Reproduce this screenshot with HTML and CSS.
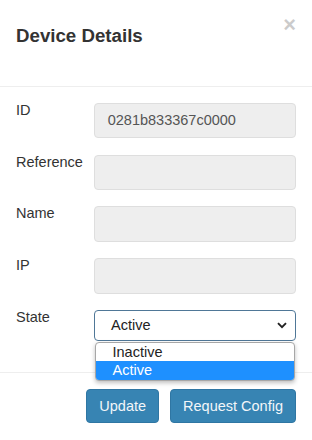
FILE: index.html
```html
<!DOCTYPE html>
<html lang="en">
<head>
    <meta charset="UTF-8">
    <meta name="viewport" content="width=device-width, initial-scale=1">
    <title>Device Details</title>
    <link rel="stylesheet" href="styles.css">
</head>
<body>
    <div class="modal">
        <div class="modal-header">
            <h4 class="modal-title">Device Details</h4>
            <span class="close">&times;</span>
        </div>
        <div class="modal-body">
            <div class="form-row">
                <label>ID</label>
                <div class="field">0281b833367c0000</div>
            </div>
            <div class="form-row">
                <label>Reference</label>
                <div class="field"></div>
            </div>
            <div class="form-row">
                <label>Name</label>
                <div class="field"></div>
            </div>
            <div class="form-row">
                <label>IP</label>
                <div class="field"></div>
            </div>
            <div class="form-row last">
                <label>State</label>
                <div class="select-wrap">
                    <div class="select-box">
                        <span>Active</span>
                        <svg class="chevron" width="10" height="7" viewBox="0 0 10 7">
                            <polyline points="1,1.2 5,5.2 9,1.2" fill="none" stroke="#222" stroke-width="1.9"/>
                        </svg>
                    </div>
                    <ul class="options">
                        <li>Inactive</li>
                        <li class="selected">Active</li>
                    </ul>
                </div>
            </div>
        </div>
        <div class="modal-footer">
            <button class="btn">Update</button>
            <button class="btn">Request Config</button>
        </div>
    </div>
</body>
</html>
```

FILE: styles.css
```css
*{
    margin:0;
    padding:0;
    box-sizing:border-box;
}
ul li{
    list-style-type:none;
}
body{
    font-family:"Liberation Sans",Arial,sans-serif;
    font-size:14.5px;
    color:#333;
    background:#fff;
}
.modal{
    width:312px;
    height:440px;
    background:#fff;
}
.modal-header{
    display:flex;
    justify-content:space-between;
    align-items:flex-start;
    padding:22.5px 16px 37.5px 16px;
    border-bottom:1px solid #eeeeee;
}
.modal-title{
    font-size:18.7px;
    font-weight:bold;
    line-height:26px;
    color:#333;
}
.close{
    font-size:21.8px;
    font-weight:bold;
    line-height:1;
    color:#000;
    opacity:.2;
    margin-top:-8.6px;
}
.modal-body{
    padding:16px 16px 31px 16px;
}
.form-row{
    display:flex;
    align-items:flex-start;
    margin-bottom:16.35px;
}
.form-row.last{
    margin-bottom:0;
}
.form-row label{
    width:78px;
    flex:none;
    line-height:16px;
    margin-top:-1px;
    color:#333;
}
.field{
    flex:1;
    height:35.4px;
    line-height:33.4px;
    padding:0 12.7px;
    background:#eeeeee;
    border:1px solid #dedede;
    border-radius:4px;
    color:#555;
}
.select-wrap{
    flex:1;
    position:relative;
}
.select-box{
    height:31px;
    display:flex;
    align-items:center;
    justify-content:space-between;
    padding:0 8px 0 16px;
    border:1px solid #4f7797;
    border-radius:4px;
    background:#fff;
    color:#222;
}
.chevron{
    display:block;
    margin-top:1px;
}
.options{
    position:absolute;
    top:32px;
    left:1px;
    right:1px;
    background:#fff;
    border:1px solid #a7a7a7;
    border-radius:4px;
    box-shadow:0 2px 4px rgba(0,0,0,0.25);
    overflow:hidden;
    z-index:2;
}
.options li{
    height:18.5px;
    line-height:18.5px;
    padding-left:16.5px;
    color:#222;
}
.options li.selected{
    background:#1e90ff;
    color:#fff;
}
.modal-footer{
    display:flex;
    justify-content:flex-end;
    gap:11px;
    padding:16px;
    border-top:1px solid #eeeeee;
}
.btn{
    height:34px;
    padding:0 12px;
    font-family:"Liberation Sans",Arial,sans-serif;
    font-size:14.5px;
    color:#f2f6f9;
    background:#3784b3;
    border:1px solid #2f76a3;
    border-radius:4px;
}
```
